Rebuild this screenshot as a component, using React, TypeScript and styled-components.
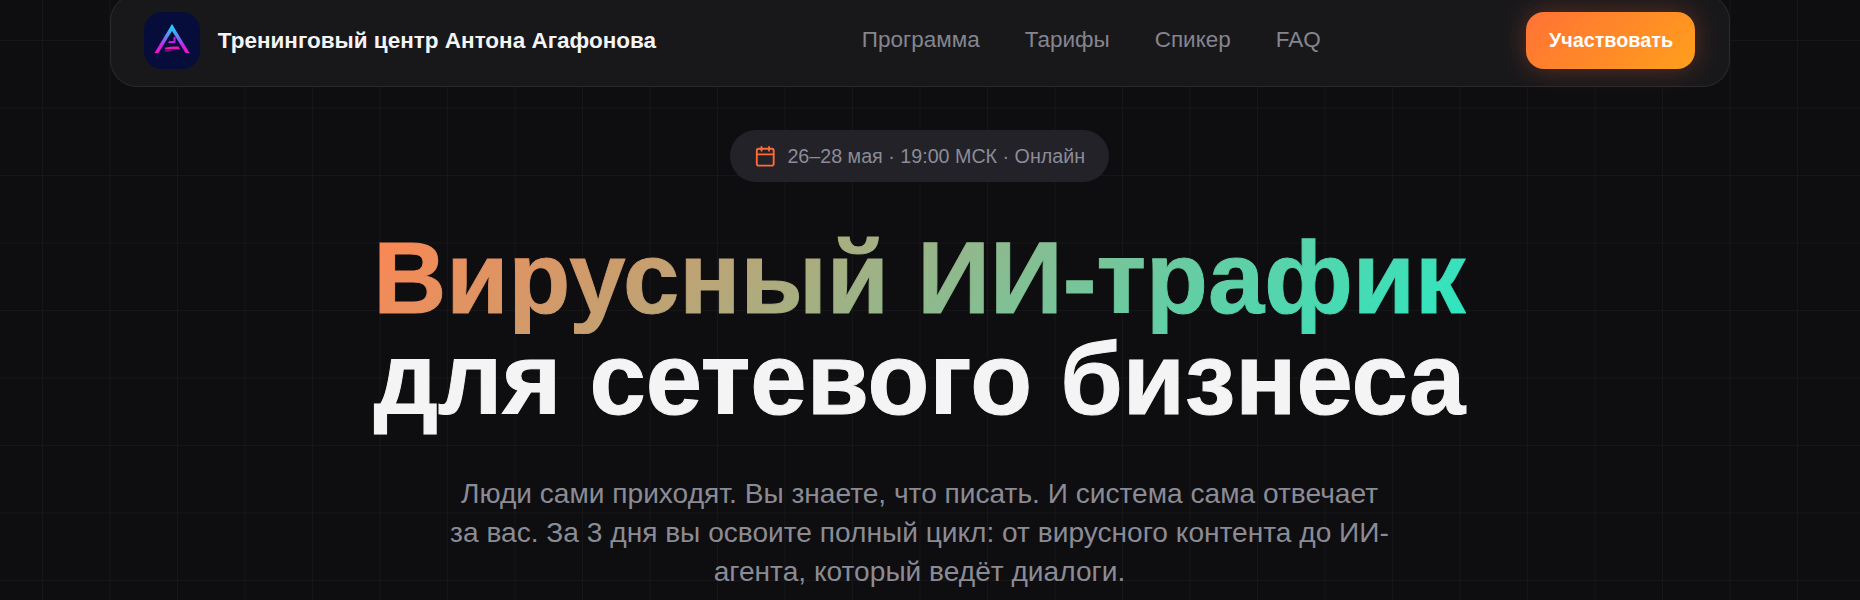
import styled, { createGlobalStyle } from "styled-components";

const GlobalStyle = createGlobalStyle`
  html, body {
    margin: 0;
    padding: 0;
    background: #0e0e11;
  }
  * {
    box-sizing: border-box;
  }
`;

const Page = styled.div`
  height: 600px;
  overflow: hidden;
  padding-right: 21px;
  display: flex;
  flex-direction: column;
  align-items: center;
  font-family: "Liberation Sans", Arial, sans-serif;
  background-color: #0e0e11;
  background-image:
    linear-gradient(to right, rgba(255, 255, 255, 0.03) 1px, transparent 1px),
    linear-gradient(to bottom, rgba(255, 255, 255, 0.03) 1px, transparent 1px);
  background-size: 67.5px 67.5px;
  background-position: 42px 40px;
`;

const NavBar = styled.nav`
  flex: none;
  width: 1620px;
  height: 93px;
  margin-top: -6px;
  padding: 0 33px;
  display: flex;
  align-items: center;
  justify-content: space-between;
  background: #18181b;
  border: 1px solid rgba(255, 255, 255, 0.08);
  border-radius: 27px;
`;

const Brand = styled.div`
  flex: none;
  display: flex;
  align-items: center;
  gap: 18px;
`;

const LogoBox = styled.div`
  flex: none;
  width: 56.25px;
  height: 56.25px;
  border-radius: 18px;
  background: #070d3a;
  display: flex;
  align-items: center;
  justify-content: center;
`;

const BrandName = styled.span`
  font-size: 22.5px;
  font-weight: 700;
  color: #f4f4f5;
  white-space: nowrap;
`;

const NavLinks = styled.div`
  display: flex;
  gap: 45px;
  padding-bottom: 2px;
`;

const NavLink = styled.a`
  font-size: 22.5px;
  color: #85858f;
  text-decoration: none;
`;

const CtaButton = styled.button`
  width: 169px;
  height: 57px;
  border: none;
  border-radius: 18px;
  font-family: inherit;
  font-size: 19.8px;
  font-weight: 700;
  color: #ffffff;
  background: linear-gradient(135deg, #ff7235, #ff9f1c);
  box-shadow: 0 0 27px rgba(255, 107, 53, 0.3);
`;

const DateBadge = styled.div`
  flex: none;
  height: 52px;
  margin-top: 43px;
  padding: 0 24px;
  display: flex;
  align-items: center;
  gap: 11px;
  font-size: 19.7px;
  color: #8c8c98;
  background: #222228;
  border-radius: 26px;
`;

const Title = styled.h1`
  flex: none;
  margin: 45px 0 0;
  font-size: 101.25px;
  line-height: 1;
  font-weight: 700;
  text-align: center;
  color: #f4f4f5;
  -webkit-text-stroke: 1px #f4f4f5;
`;

const GradientText = styled.span`
  background: linear-gradient(135deg, #ff8552, #2be8c2);
  -webkit-background-clip: text;
  background-clip: text;
  color: transparent;
  -webkit-text-stroke: 1px transparent;
`;

const Lead = styled.p`
  flex: none;
  width: 945px;
  margin: 44px 0 0;
  font-size: 28.125px;
  line-height: 39.4px;
  text-align: center;
  color: #8b8b95;
`;

const LogoMark = () => (
  <svg width="36" height="34" viewBox="0 0 36 34" fill="none">
    <defs>
      <linearGradient id="logoGrad" x1="18" y1="0" x2="18" y2="29" gradientUnits="userSpaceOnUse">
        <stop offset="0" stopColor="#19e0f5" />
        <stop offset="0.4" stopColor="#5a8cf7" />
        <stop offset="0.75" stopColor="#d020e8" />
        <stop offset="1" stopColor="#f80fd0" />
      </linearGradient>
    </defs>
    <path d="M18 0 L35.5 29 H31.5 L18 7 L4.5 29 H0.5 Z" fill="url(#logoGrad)" />
    <path d="M19.5 13 H21.5 V19 H14 L15.2 17 H19.5 Z" fill="#c81ae4" />
    <path d="M11.5 23.5 Q18 22 24.5 22.5 L26 25.2 H10.5 Z" fill="#f014c0" />
    <path d="M11 26.2 H20 L15 27.4 H10.5 Z" fill="#a0127e" />
  </svg>
);

const CalendarIcon = () => (
  <svg width="22.5" height="22.5" viewBox="0 0 24 24" fill="none" stroke="#ff6b35" strokeWidth="2" strokeLinecap="round" strokeLinejoin="round">
    <path d="M8 2v4" />
    <path d="M16 2v4" />
    <rect x="3" y="4" width="18" height="18" rx="2" />
    <path d="M3 10h18" />
  </svg>
);

export default function App() {
  return (
    <>
      <GlobalStyle />
      <Page>
        <NavBar>
          <Brand>
            <LogoBox>
              <LogoMark />
            </LogoBox>
            <BrandName>Тренинговый центр Антона Агафонова</BrandName>
          </Brand>
          <NavLinks>
            <NavLink href="#program">Программа</NavLink>
            <NavLink href="#prices">Тарифы</NavLink>
            <NavLink href="#speaker">Спикер</NavLink>
            <NavLink href="#faq">FAQ</NavLink>
          </NavLinks>
          <CtaButton>Участвовать</CtaButton>
        </NavBar>
        <DateBadge>
          <CalendarIcon />
          26–28 мая · 19:00 МСК · Онлайн
        </DateBadge>
        <Title>
          <GradientText>Вирусный ИИ-трафик</GradientText>
          <br />
          для сетевого бизнеса
        </Title>
        <Lead>
          Люди сами приходят. Вы знаете, что писать. И система сама отвечает за вас. За 3 дня вы
          освоите полный цикл: от вирусного контента до ИИ-агента, который ведёт диалоги.
        </Lead>
      </Page>
    </>
  );
}
